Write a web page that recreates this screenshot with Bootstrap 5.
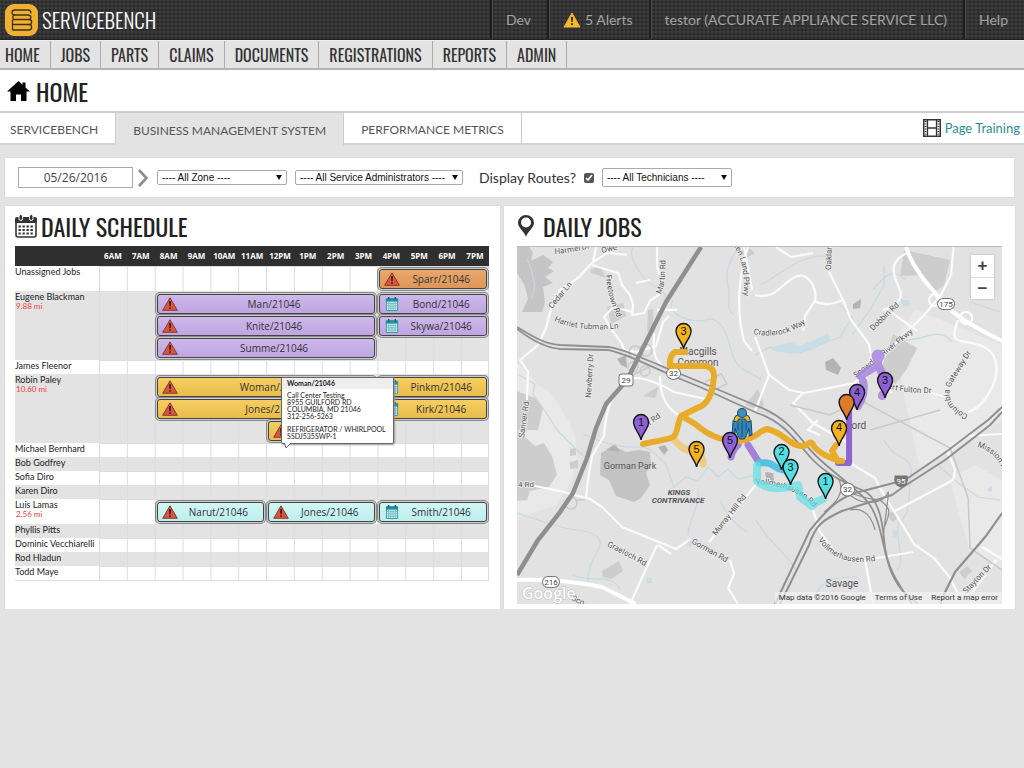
<!DOCTYPE html>
<html lang="en">
<head>
<meta charset="utf-8">
<meta name="viewport" content="width=device-width, initial-scale=1">
<title>ServiceBench - Home</title>
<link rel="stylesheet" href="https://cdn.jsdelivr.net/npm/bootstrap@5.3.0/dist/css/bootstrap.min.css">
<style>
body{background:#e3e3e3;color:#333;font-family:Lato,"Open Sans",sans-serif;font-size:13px;line-height:16px}
a{text-decoration:none}
.osw{font-family:Oswald,"Roboto Condensed",sans-serif;font-weight:400}
.topbar{height:40px;background-color:#353535;background-image:radial-gradient(#292929 1px,transparent 1px),radial-gradient(#3d3d3d 1px,transparent 1px);background-size:4px 4px;background-position:0 0,2px 2px;border-bottom:1px solid #222}
.brandname{font-size:21px;font-weight:300;color:#fff;line-height:38px}
.topbar .toplink{color:#a3a3a3;font-size:14px;padding:0 16px 0 14px;border-left:2px solid #1d1d1d;box-shadow:inset 1px 0 #4c4c4c}
.mainnav{height:30px;border-bottom:2px solid #b4b4b4;border-top:1px solid #eee}
.mainnav a{color:#333;font-size:16px;line-height:28px;padding:0 10px;border-right:1px solid #aaa}
.mainnav a:first-child{padding-left:5px}
.titlebar{height:43px;background:#fff;border-bottom:2px solid #ccc;gap:6px;padding-left:7px}
.titlebar h1{font-size:24px;line-height:40px;color:#222}
.tabbar{height:32px;background:#fff;border-bottom:2px solid #d4d4d4}
.tabbar .tab-item{font-size:12px;color:#555;padding:3px 17px 0;border-right:1px solid #ccc}
.tabbar .tab-item:first-child{padding-left:10px}
.tabbar .tab-item.active{background:#e3e3e3;margin-bottom:-2px}
.training{color:#2b8f93;font-size:13px}
.panel{background:#fff;box-shadow:0 0 1px #bbb}
.filters{height:39px;margin:13px 10px 9px 5px;padding:0 13px}
.filters .datebox{width:115px;height:21px;border:1px solid #aaa;text-align:center;font-size:12px;color:#444;font-family:"Open Sans",sans-serif;border-radius:0}
.filters select{appearance:none;border:1px solid #aaa;border-radius:2px;height:15px;font:10px/12px "Liberation Sans",sans-serif;color:#111;padding:0 14px 0 4px;background:#fff url("data:image/svg+xml,%3Csvg xmlns='http://www.w3.org/2000/svg' viewBox='0 0 6 5'%3E%3Cpath d='M0 0h6L3 5z' fill='%23111'/%3E%3C/svg%3E") no-repeat right 4px center/6px 5px}
.filters .zone{width:130px}.filters .admins{width:168px}.filters .techs{width:130px;height:19px}
.filters input[type=checkbox]{width:10px;height:10px;margin:0;accent-color:#555}
.routes{font-size:14px;color:#333}
.boards{display:grid;grid-template-columns:49% minmax(0,1fr);gap:4px;padding:0 9px 0 5px}
.panel h2{font-size:24px;line-height:32px;color:#222}
.board{min-height:403px}
.schedboard{padding:4px 11px 0 10px}
.jobsboard{padding:4px 13px 0}
.sched{table-layout:fixed;width:100%;border-collapse:separate;border-spacing:0;border-bottom:1px solid #ddd}
.sched th,.sched td{padding:0}
.sched thead th{background:#2f2f2f;color:#fff;font:bold 8px/20px "Open Sans",sans-serif;text-align:center}
.sched tbody th{font-size:9px;line-height:10px;font-weight:400;color:#222;vertical-align:top;padding-top:1px;white-space:nowrap}
.sched tbody th span{display:block;color:#f23b3b;font-size:8px;line-height:9px;padding-left:1px}
.sched tbody td{height:14px;background:linear-gradient(to right,#dcdcdc 1px,transparent 1px) 0 0/calc(100%/14) 100%;box-shadow:inset -1px 0 #ddd}
.sched tbody tr:nth-child(even){background:#e3e3e3}
.sched tbody tr:nth-child(odd) td{box-shadow:inset -1px 1px #ddd}
.lanes{display:grid;grid-template-columns:repeat(14,1fr);grid-auto-rows:20px;row-gap:2px;padding:3px 0 2px}
.job{margin:0 2px;position:relative;border:1px solid #444;border-radius:3px;box-shadow:0 0 0 1px #ccc,0 0 0 2px #888;font:10px/18px "Open Sans",sans-serif;color:#333;text-align:center;padding-left:16px}
.job>svg{position:absolute;left:4px;top:2px;width:16px;height:14px}
.from8{grid-column:3/11}.from4{grid-column:11/15}.from8s{grid-column:3/7}.from12{grid-column:7/11}
.lane1{grid-row:1}.lane2{grid-row:2}.lane3{grid-row:3}
.violet{background:linear-gradient(#cdb8ea,#bfa5e2)}.amber{background:linear-gradient(#f5cd62,#e9bd4b)}.orangey{background:linear-gradient(#e9a76b,#dd965a)}.aqua{background:linear-gradient(#d2f6f5,#bdeeee)}
.tip{position:absolute;left:12px;bottom:-4px;width:113px;z-index:2;background:#fff;border:1px solid #666;border-radius:2px;text-align:left;font:7px/7px Lato,sans-serif;color:#222;box-shadow:1px 1px 2px #999}
.tip strong{display:block;background:#eee;padding:2px 5px;margin-bottom:3px}
.tip p{margin:0 0 6px;padding:0 5px}
.tip p:last-of-type{margin-bottom:3px}
.tip>svg{position:absolute;left:2px;top:100%;width:9px;height:6px}
.mapbox{position:relative;height:358px;border-top:1px solid #bbb;overflow:hidden}
.zoomer{position:absolute;top:8px;right:8px;width:23px;background:#fff;box-shadow:0 0 2px #aaa}
.zoomer button{height:22px;border:0;background:none;color:#444;font:bold 17px/20px "Liberation Sans",sans-serif;padding:0}
.zoomer button+button{border-top:1px solid #ddd}
.maplegal{position:absolute;right:0;bottom:0;background:rgba(240,240,240,.75);font:8px/12px Roboto,sans-serif;color:#333;padding:0 4px;gap:9px}
.maplegal a{color:#333}
</style>
</head>
<body>
<svg width="0" height="0" class="position-absolute" aria-hidden="true">
<symbol id="warn" viewBox="0 0 16 14"><path d="M8 .8 15.3 13.3H.7Z" fill="#d9553f" stroke="#7a332a" stroke-width=".9" stroke-linejoin="round"/><path d="M7 4.3h2L8.6 9.3H7.4ZM7.2 10.2h1.6v1.6H7.2Z" fill="#3a1512"/></symbol>
<symbol id="cal" viewBox="0 0 14 15"><path d="M1 2h12v12.400H1Z" fill="#e3f6f6" stroke="#2a99a3"/><path d="M.5 1.500h13v3.500H.5Z" fill="#2190a0"/><path d="M3.500 0v3M10.500 0v3" stroke="#13606c" stroke-width="1.400"/><path d="M1 7.200h12M1 9.500h12M1 11.900h12M3.500 5v9M5.800 5v9M8.200 5v9M10.500 5v9" stroke="#58b4bb" stroke-width=".8"/></symbol>
</svg>

<header class="topbar d-flex align-items-stretch">
  <a href="#" class="d-flex align-items-center me-auto ps-1">
    <svg width="34" height="34" viewBox="0 0 34 34" class="flex-shrink-0"><rect x="1" y="1" width="33" height="32" rx="9" fill="#efb034"/><g fill="none" stroke="#3c2f17" stroke-width="1.300"><path d="M27 10.500c0-2-1-3.500-3-3.500H11c-4 0-4 5 0 5h13c3.500 0 4 4.500.5 4.500M11 12c-2 0-3 2-1.500 4.500h15.500c3.500 0 3.500 5 0 5M8.500 16.500v10.500M8.500 21.500h16.500c3.500 0 3.500 5.500 0 5.500H8.500"/></g></svg>
    <span class="brandname osw ps-1">SERVICEBENCH</span>
  </a>
  <nav class="d-flex" aria-label="Account">
    <a href="#" class="toplink d-flex align-items-center">Dev</a>
    <a href="#" class="toplink d-flex align-items-center gap-1"><svg width="18" height="16" viewBox="0 0 18 16"><path d="M9 1 17 15H1Z" fill="#f4b92e" stroke="#f4b92e" stroke-linejoin="round"/><path d="M8 5h2l-.4 5H8.400ZM8.100 11.300h1.800V13H8.100Z" fill="#222"/></svg>5 Alerts</a>
    <a href="#" class="toplink d-flex align-items-center">testor (ACCURATE APPLIANCE SERVICE LLC)</a>
    <a href="#" class="toplink d-flex align-items-center">Help</a>
  </nav>
</header>
<nav class="mainnav osw d-flex" aria-label="Main">
  <a href="#">HOME</a><a href="#">JOBS</a><a href="#">PARTS</a><a href="#">CLAIMS</a><a href="#">DOCUMENTS</a><a href="#">REGISTRATIONS</a><a href="#">REPORTS</a><a href="#">ADMIN</a>
</nav>
<div class="titlebar d-flex align-items-center">
  <svg width="23" height="20" viewBox="0 0 23 20"><path d="M11.500 0 15.500 3.700V1.500h3v5L23 10.500h-3.500V20H14v-6.500H9V20H3.500v-9.500H0Z" fill="#000"/></svg>
  <h1 class="osw m-0">HOME</h1>
</div>
<div class="tabbar d-flex align-items-stretch">
  <a href="#" class="tab-item d-flex align-items-center">SERVICEBENCH</a>
  <a href="#" class="tab-item active d-flex align-items-center">BUSINESS MANAGEMENT SYSTEM</a>
  <a href="#" class="tab-item d-flex align-items-center">PERFORMANCE METRICS</a>
  <a href="#" class="training ms-auto me-1 d-flex align-items-center gap-1"><svg width="18" height="18" viewBox="0 0 18 18" fill="none" stroke="#333"><rect x=".75" y=".75" width="16.500" height="16.500" stroke-width="1.500"/><path d="M4.500 1v16M13.500 1v16M4.500 9h9" stroke-width="1.300"/><path d="M2.700 2v15M15.300 2v15" stroke-width="1.800" stroke-dasharray="1 1.500"/></svg>Page Training</a>
</div>

<main>
<form class="panel filters d-flex align-items-center">
  <input class="datebox" type="text" value="05/26/2016" aria-label="Date">
  <button type="button" class="border-0 bg-transparent p-0 ms-1 d-flex" aria-label="Next day"><svg width="12" height="18" viewBox="0 0 12 18"><path d="M2 1 9.500 9 2 17" fill="none" stroke="#8d8d8d" stroke-width="2.600"/></svg></button>
  <select class="zone ms-2" aria-label="Zone"><option>---- All Zone ----</option></select>
  <select class="admins ms-2" aria-label="Service administrators"><option>---- All Service Administrators ----</option></select>
  <label class="routes ms-3" for="showroutes">Display Routes?</label>
  <input class="ms-2" type="checkbox" id="showroutes" checked>
  <select class="techs ms-2" aria-label="Technicians"><option>---- All Technicians ----</option></select>
</form>

<div class="boards">
<section class="panel board schedboard">
  <div class="d-flex align-items-center gap-1 pb-1">
    <svg width="22" height="24" viewBox="0 0 22 24"><path d="M1 5v16q0 2 2 2h16q2 0 2-2V5" fill="none" stroke="#333" stroke-width="1.600"/><path d="M0 5q0-2 2-2h18q2 0 2 2v4H0Z" fill="#333"/><g fill="#333" stroke="#fff"><rect x="4" y=".5" width="3.500" height="6" rx="1.700"/><rect x="14.500" y=".5" width="3.500" height="6" rx="1.700"/></g><path d="M3.500 12.500h15M3.500 16h15M3.500 19.500h15" stroke="#333" stroke-width="2.200" stroke-dasharray="2.300 1.700"/></svg>
    <h2 class="osw m-0">DAILY SCHEDULE</h2>
  </div>
  <table class="sched">
    <colgroup><col style="width:84px"><col span="14"></colgroup>
    <thead><tr><th></th><th>6AM</th><th>7AM</th><th>8AM</th><th>9AM</th><th>10AM</th><th>11AM</th><th>12PM</th><th>1PM</th><th>2PM</th><th>3PM</th><th>4PM</th><th>5PM</th><th>6PM</th><th>7PM</th></tr></thead>
    <tbody>
    <tr><th scope="row">Unassigned Jobs</th><td colspan="14"><div class="lanes"><div class="job orangey from4 lane1"><svg><use href="#warn"/></svg>Sparr/21046</div></div></td></tr>
    <tr><th scope="row">Eugene Blackman<span>9.88 mi</span></th><td colspan="14"><div class="lanes">
      <div class="job violet from8 lane1"><svg><use href="#warn"/></svg>Man/21046</div><div class="job violet from4 lane1"><svg><use href="#cal"/></svg>Bond/21046</div>
      <div class="job violet from8 lane2"><svg><use href="#warn"/></svg>Knite/21046</div><div class="job violet from4 lane2"><svg><use href="#cal"/></svg>Skywa/21046</div>
      <div class="job violet from8 lane3"><svg><use href="#warn"/></svg>Summe/21046</div></div></td></tr>
    <tr><th scope="row">James Fleenor</th><td colspan="14"></td></tr>
    <tr><th scope="row">Robin Paley<span>10.60 mi</span></th><td colspan="14"><div class="lanes">
      <div class="job amber from8 lane1"><svg><use href="#warn"/></svg>Woman/21046</div><div class="job amber from4 lane1"><svg><use href="#cal"/></svg>Pinkm/21046</div>
      <div class="job amber from8 lane2"><svg><use href="#warn"/></svg>Jones/21046</div><div class="job amber from4 lane2"><svg><use href="#cal"/></svg>Kirk/21046</div>
      <div class="job amber from12 lane3"><svg><use href="#warn"/></svg>
        <div class="tip" role="tooltip"><strong>Woman/21046</strong><p>Call Center Testing<br>8955 GUILFORD RD<br>COLUMBIA, MD 21046<br>312-256-5263</p><p>REFRIGERATOR / WHIRLPOOL<br>SSDJ535SWP-1</p><svg viewBox="0 0 9 6"><path d="M0-1 2 5 8-1" fill="#fff" stroke="#666"/></svg></div>
      </div></div></td></tr>
    <tr><th scope="row">Michael Bernhard</th><td colspan="14"></td></tr>
    <tr><th scope="row">Bob Godfrey</th><td colspan="14"></td></tr>
    <tr><th scope="row">Sofia Diro</th><td colspan="14"></td></tr>
    <tr><th scope="row">Karen Diro</th><td colspan="14"></td></tr>
    <tr><th scope="row">Luis Lamas<span>2.56 mi</span></th><td colspan="14"><div class="lanes"><div class="job aqua from8s lane1"><svg><use href="#warn"/></svg>Narut/21046</div><div class="job aqua from12 lane1"><svg><use href="#warn"/></svg>Jones/21046</div><div class="job aqua from4 lane1"><svg><use href="#cal"/></svg>Smith/21046</div></div></td></tr>
    <tr><th scope="row">Phyllis Pitts</th><td colspan="14"></td></tr>
    <tr><th scope="row">Dominic Vecchiarelli</th><td colspan="14"></td></tr>
    <tr><th scope="row">Rod Hladun</th><td colspan="14"></td></tr>
    <tr><th scope="row">Todd Maye</th><td colspan="14"></td></tr>
    </tbody>
  </table>
</section>
<section class="panel board jobsboard">
  <div class="d-flex align-items-center pb-1 gap-2">
    <svg width="18" height="22" viewBox="-1 0 18 22"><path d="M8 22C7 17 0 13 0 8a8 8 0 0 1 16 0c0 5-7 9-8 14Z" fill="#333"/><circle cx="8" cy="7.500" r="5" fill="#fff"/></svg>
    <h2 class="osw m-0">DAILY JOBS</h2>
  </div>
  <div class="mapbox">
  <svg width="100%" height="100%" viewBox="517 247 485 357" preserveAspectRatio="xMidYMid slice" role="img" aria-label="Map of daily jobs" font-family="Roboto, sans-serif">
    <rect x="517" y="247" width="485" height="357" fill="#e2e2e2"/>
    <!-- land tints -->
    <path d="M517 362 537 384 552 394 568 420 575 436 577 455 572 480 556 505 517 518ZM1002 480 975 465 950 478 955 500 968 545 1002 572ZM893 340 916 310 1002 345V420L920 470 905 400Z" fill="#e9e9e9"/>
    <path d="M529 247 533 252 531 261 543 255 553 262 548 268 554 271 545 277 553 283 543 287 545 302 542 312 522 312 528 299 525 286 517 273V247Z" fill="#c5c5c5"/>
    <path d="M601 453 614 446 626 452 639 450 650 452 651 465 646 473 650 485 641 498 634 502 616 496 609 480 600 475Z" fill="#c3c3c3"/>
    <path d="M517 430 535 446 544 443 552 456 557 475 549 487 530 491 527 500 517 501ZM570 449l6-1v7l-6 1ZM570 462l8-2v8l-8 1ZM517 391 535 398 543 408 538 430H517ZM904 250 950 260 944 285 932 294 920 275 900 276ZM893 334 917 348 906 370 895 384 881 370ZM648 310l5-1v22h-6ZM607 307l16-4 3 13-15 8ZM643 396l16-10-4 12ZM602 571l17-10 4 10-12 8-8-2ZM959 572l8-6 5 5-8 8ZM887 514l9-4 1 9-5 3ZM590 270l10-4 6 12-15-5ZM745 405l13-16 6 16-5 5ZM741 250l7-3 7 6-9 5Z" fill="#cdcdcd"/>
    <path d="M853 304l8-5-1 9-7 1ZM825 362l8-4 8 10-3 7-12-5ZM617 359l9-4 1 13-6-3ZM658 447l7-2 3 5-4 5ZM765 472l8 1 1 9-8-4ZM606 450l9-6 5 8Z" fill="#b3b3b3"/>
    <!-- streams -->
    <g fill="none" stroke="#c5d9e2" stroke-width="1.200">
      <path d="M527 260c6 8 4 16 8 24l-3 15M633 247c-5 10 4 20 10 30s20 8 24 22M517 374l18 10-2 10 14 20 10 16 20 20 8 7M738 247c-8 15-14 25-10 40s-4 20 6 28M673 300c-10 14 20 24 32 20s20 6 26 30 20 20 30 30M583 434c22 10 40 14 53 13s18 5 30 18l8 22 12-10 12 4 10-14 10 10 10-8 10 10 14-3 16 12M517 513c20 6 40 15 60 17s28 10 20 22-8 22-10 34M572 575c20 8 40-2 48 14M688 535c0-14 12-28 10-46M760 285c18-8 42-34 70-28M755 355l15-8 30 6 20-8 20-8 12-20-12-12M873 290c10-15 22-22 32-10M884 265v20l-14 25-18 25M905 340c20 0 34-14 47 2M1000 312l-30-10M884 440c8 20 30 15 27 34s0 40-10 46 6 40-4 50M938 465l20 18 20 14 22 3M756 520c10 20 28 30 40 50M755 410l22 6 16 22-8 16M720 500c4 12 20 30 28 32M812 600c14-30 35-20 46-24"/>
    </g>
    <path d="M770 348 790 342 800 346 828 334 830 340 812 350 790 354 772 350ZM900 300h8l3 5-8 2ZM687 541h5v5h-5ZM647 578h5v5h-5ZM988 488l4-2v6l-5-1ZM893 531h4v6h-4Z" fill="#c8dde6"/>
    <!-- local roads -->
    <g fill="none" stroke="#fbfbfb" stroke-width="2.200" stroke-linejoin="round">
      <path d="M596 247 593 262 578 278 560 290 552 305 546 328 538 345 520 360 528 372 527 400M593 262l14-9 20 2M592 265l26 8 4 12 8 10 3 10-1 10 12-2 6-12 10-7M633 312l-20-5-9 10 6 10 12 17 2 6 12 2 20-6 7-24 6-6M657 247v20l6 18-5 10M636 283l14-3M657 310h20M654 333c0 18-2 22 8 33M604 436c2-30 8-45 30-58 14 0 30 8 40 14l36 8M660 376c0 20 6 32 20 40M604 436l-12 20-4 24-2 18M530 485l30 6 30 8 12 8 20 20 54 22 14-10M657 545 630 604M658 545l13 9M709 542l49-60M730 560l4 14-6 14 10 16"/>
      <path d="M748 247c-10 30-12 65-4 94l8 10M744 247 752 290M755 295c22 5 26-12 40-18s22 12 20 24l-10 15-2 15M815 301c10 6 20 2 28-1M829 272l14 28 8 20 18 24 2 12-5 16 0 8M755 337l14 38 20 15 15 3 50-10 30-28 40-40 17-20 10-20 3-35M803 393l-10 10 20 20 35 20M769 375l-14 36M907 253c-18 8-15 20-8 35s-10 20-16 22M892 313l25 18M958 320c-10 25 2 20 18 24s22 14 20 30-16 35-28 38M930 393l17 4M892 393l-8-10M840 463l10 0 25 15 6 12 33 54 20 14 16 20 10 20M893 512l60-32 2-10-8-20 20-14 35-2M812 507l8 25 18 24 27 4 48-8M865 560l8 44M982 547l20 12M996 560l-25 34M820 435l-12-5 10-10M776 247l15 10 22-4"/>
    </g>
    <g fill="none" stroke="#fff" stroke-width="4"><path d="M906 247c6 20 20 36 36 54 12 15 34 27 60 40M517 580c30-1 60 2 85 7l34 17"/></g>
    <g fill="none" stroke="#fff" stroke-width="2"><circle cx="935" cy="300" r="6"/><circle cx="966" cy="318" r="6"/></g>
    <g fill="none" stroke="#c9c9c9" stroke-width="1.500"><circle cx="635" cy="352" r="6"/><circle cx="646" cy="350" r="6"/><circle cx="633" cy="367" r="5"/><circle cx="645" cy="371" r="5"/><circle cx="571" cy="503" r="6"/><path d="M705 382l16-8 6 10-13 6M870 430l70-20M790 405l40 10 30-15 90 48 18 50 2 50 32 22M623 380l28-14M575 500l10 0"/></g>
    <!-- highways -->
    <g fill="none" stroke="#8f8f8f" stroke-linejoin="round">
      <path d="M701 247 666 302 639 356 627 380 606 404 596 428 587 458 573 493 560 512 538 540 517 575" stroke-width="4.500"/>
      <path d="M517 327C535 338 545 344 560 345L608 347C625 350 640 357 673 371L700 382 757 406C790 418 800 440 815 455S852 485 866 500 882 545 889 566 905 594 918 604M517 329C535 343 548 348 560 349L608 350C625 354 640 361 673 376L700 387 757 413C785 422 798 444 812 459S848 485 862 490 882 515 884 540 895 580 912 604" stroke-width="1.800"/>
      <path d="M1002 407 988 420 943 454 905 480 855 493C835 500 825 512 810 530L775 604M1002 412 990 425 945 460 903 487 892 495 842 511C822 520 815 526 809 545L780 604" stroke-width="2"/>
      <path d="M1002 513 985 537 955 572 945 592 940 604" stroke-width="2.200"/>
      <path d="M838 478c8 14-2 25-14 34M845 490c15 18 38 14 42 4s-2 20-4 45M850 510c8-2 20 0 25 20M884 498c-10 5-26-4-40-6M880 500c10 8 12 10 3 30" stroke-width="1.200"/>
    </g>
    <!-- place and street names -->
    <defs>
      <path id="pHT" d="M554 321Q580 333 622 328"/><path id="pHar" d="M555 254Q575 253 600 245"/><path id="pCr" d="M753 334Q788 341 814 316"/><path id="pBL" d="M733 245Q747 265 743 302"/><path id="pFree" d="M606 275Q607 298 620 324"/><path id="pMM" d="M661 294Q667 280 665 252"/><path id="pCol" d="M968 415Q940 402 954 380L976 345"/><path id="pFul" d="M888 388Q905 394 945 393"/><path id="pVol" d="M818 540Q838 570 884 559"/><path id="pVm" d="M755 484Q795 485 814 508"/><path id="pMis" d="M977 447Q998 452 1004 476"/><path id="pSn" d="M856 378Q885 355 920 327"/><path id="pGL" d="M607 546Q625 555 650 569"/>
    </defs>
    <g font-size="8" fill="#555" stroke="#eee" stroke-width="1.500" paint-order="stroke">
      <text><textPath href="#pHT">Harriet Tubman Ln</textPath></text><text><textPath href="#pHar">Harmel Dr</textPath></text><text><textPath href="#pCr">Cradlerock Way</textPath></text><text><textPath href="#pBL">ken Land Pkwy</textPath></text><text><textPath href="#pFree">Freetown Rd</textPath></text><text><textPath href="#pMM">Martin Rd</textPath></text><text><textPath href="#pCol">Columbia Gateway Dr</textPath></text><text><textPath href="#pFul">ert Fulton Dr</textPath></text><text><textPath href="#pVol">Vollmerhausen Rd</textPath></text><text><textPath href="#pVm">Vollmerhausen Rd</textPath></text><text><textPath href="#pMis">Mission R</textPath></text><text><textPath href="#pSn">Snowden River Pkwy</textPath></text><text><textPath href="#pGL">Graeloch Rd</textPath></text>
      <text transform="translate(552 309) rotate(-50)">Cedar Ln</text><text transform="translate(602 253) rotate(-12)">Owe</text><text transform="translate(591 398) rotate(-87)">Newberry Dr</text><text transform="translate(524 438) rotate(-82)">Sanner Rd</text><text transform="translate(643 431) rotate(-38)">ger Rd</text><text transform="translate(831 270) rotate(-88)">Oaklan</text><text transform="translate(873 331) rotate(-44)">Dobbin Rd</text><text transform="translate(716 536) rotate(-52)">Murray Hill Rd</text><text transform="translate(691 543) rotate(29)">Gorman Rd</text><text x="518" y="487">4 Rd</text><text transform="translate(966 594) rotate(-46)">Stayton Dr</text><text transform="translate(571 600) rotate(25)">Sco</text>
    </g>
    <g font-size="10" fill="#555" text-anchor="middle"><text x="630" y="469" font-size="9">Gorman Park</text><text x="842" y="587">Savage</text><text x="698" y="355">Macgills</text><text x="698" y="366">Common</text><text x="857" y="429">ford</text><g font-style="italic" font-weight="700" font-size="8"><text x="679" y="495">KINGS</text><text x="678" y="503">CONTRIVANCE</text></g></g>
    <!-- road shields -->
    <g fill="#fff" stroke="#777"><rect x="619" y="374" width="14" height="12" rx="3"/><ellipse cx="673.500" cy="373.500" rx="7" ry="6"/><ellipse cx="847.500" cy="489.500" rx="7" ry="6.500"/><rect x="937.500" y="298.500" width="17" height="11" rx="5.500"/><rect x="542.500" y="576.500" width="17" height="11" rx="5.500"/><path d="M895 476h12q2 9-6 11-8-2-6-11Z" fill="#777"/></g>
    <g font-size="8" fill="#444" text-anchor="middle"><text x="626" y="383">29</text><text x="673.500" y="376">32</text><text x="847.500" y="492">32</text><text x="946" y="307">175</text><text x="551" y="585">216</text><text x="901" y="484" fill="#fff">95</text></g>
    <!-- technician routes -->
    <g fill="none" stroke-linecap="round" stroke-linejoin="round" stroke-width="7">
      <path d="M674 439q8 12 24 14q6 5 5 11" stroke="#f1c45c" opacity=".7"/>
      <path d="M731 457q2-8 7-12M748 445l10 16" stroke="#9568d6" opacity=".8"/>
      <path d="M849 413V463H838" stroke="#9064cf" stroke-width="6"/>
      <path d="M858 406q8-12 5-25M860 376l18-11M878 358v7l5 11M882 395v1" stroke="#a27ddb" opacity=".8" stroke-width="8"/>
      <circle cx="878" cy="356" r="6.500" fill="#b394e2" stroke="none"/>
      <path d="M759 463c16-2 14 6 24 7" stroke="#55c2e2"/>
      <path d="M757 466v15c10 10 27 8 41 4l2 12 12 9 4-4 7-3" stroke="#5fe0e5" opacity=".7" stroke-width="8"/>
      <path d="M685 352H675q-6 4-5 14l36 0q8 2 8 10-2 28-17 32l-16 8c-4 8-3 18-8 21s-18 4-30 7M682 416l13 8c12 10 24 17 44 17 20-3 18-10 28-12 18 4 22 17 34 17 9 0 6-5 11-3 4 10 22 17 30 18M838 461l-6-10 4-6" stroke="#e9ac2a" stroke-width="6"/>
    </g>
    <!-- technician -->
    <g stroke="#174d6d"><path d="M734 424q-1-8 4-9h8q5 1 4 9Z" fill="#f0b42a"/><circle cx="742" cy="413" r="4.500" fill="#3e8fbd"/><path d="M733 421l4 1 2-3h6l2 3 4-1 1 14-3 1v-8l-3 8-2 3h-4l-2-3-3-8v8l-3-1Z" fill="#3387b8"/><path d="M738 423v7M746 423v7M742 421v16" fill="none"/></g>
    <!-- numbered pins -->
    <defs><path id="pin" d="M0 0C-1-7-7.500-11-7.500-18A7.500 7.500 0 0 1 7.500-18C7.500-11 1-7 0 0Z" stroke="#161616" stroke-width="1.400"/></defs>
    <g fill="#f6b21b"><use href="#pin" x="683.500" y="349"/><use href="#pin" x="696.500" y="467"/></g>
    <g fill="#8d61d5"><use href="#pin" x="641" y="440"/><use href="#pin" x="730" y="458"/><use href="#pin" x="885" y="398"/><use href="#pin" x="857" y="410"/></g>
    <g fill="#51dfe3"><use href="#pin" x="781.500" y="470"/><use href="#pin" x="790.500" y="485"/><use href="#pin" x="825.500" y="499"/></g>
    <use href="#pin" x="846.500" y="420" fill="#dd7b28"/><use href="#pin" x="839" y="446" fill="#f6b21b"/>
    <g font-family="Liberation Sans, sans-serif" font-size="11" fill="#111" text-anchor="middle"><text x="683.500" y="335">3</text><text x="696.500" y="453">5</text><text x="839" y="431">4</text><text x="641" y="426">1</text><text x="730" y="444">5</text><text x="885" y="384">3</text><text x="857" y="396">4</text><text x="781.500" y="455">2</text><text x="790.500" y="471">3</text><text x="825.500" y="485">1</text></g>
    <text x="522" y="599" font-size="16" font-family="Open Sans, sans-serif" font-weight="600" fill="#fff" stroke="#bbb" stroke-width="1" paint-order="stroke">Google</text>
  </svg>
  <div class="zoomer d-grid"><button type="button" aria-label="Zoom in">+</button><button type="button" aria-label="Zoom out">−</button></div>
  <div class="maplegal d-flex"><span>Map data ©2016 Google</span><a href="#">Terms of Use</a><a href="#">Report a map error</a></div>
  </div>
</section>
</div>
</main>
<script src="https://cdn.jsdelivr.net/npm/bootstrap@5.3.0/dist/js/bootstrap.bundle.min.js"></script>
</body>
</html>
